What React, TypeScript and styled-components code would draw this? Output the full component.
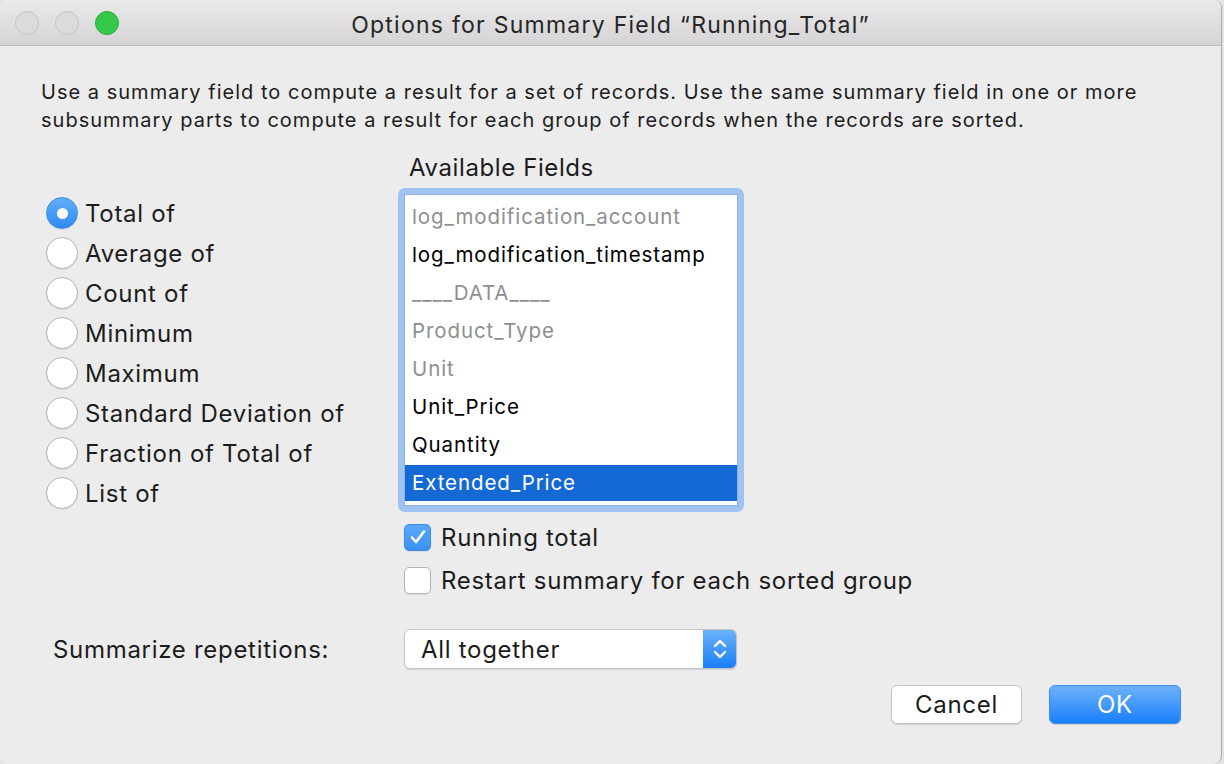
import React from "react";
import styled, { createGlobalStyle } from "styled-components";

const GlobalStyle = createGlobalStyle`
  html, body { margin: 0; padding: 0; }
  body {
    background: #e4e4e4;
    font-family: Inter, "Noto Sans", sans-serif;
    -webkit-font-smoothing: antialiased;
  }
`;

const Window = styled.div`
  width: 1221px;
  height: 764px;
  background: #ececec;
  border-radius: 8px 8px 8px 8px;
  border-right: 1px solid #a9a9a9;
  overflow: hidden;
  display: flex;
  flex-direction: column;
  color: #1c1c1c;
  white-space: nowrap;
`;

const TitleBar = styled.div`
  height: 45px;
  flex: none;
  display: grid;
  grid-template-columns: 1fr auto 1fr;
  align-items: center;
  background: linear-gradient(#ebe9eb, #d5d3d5);
  border-bottom: 1px solid #bdbbbd;
`;

const Lights = styled.div`
  display: flex;
  gap: 16px;
  padding-left: 15px;
`;

const Light = styled.span<{ $c: string; $b: string }>`
  width: 24px;
  height: 24px;
  border-radius: 50%;
  box-sizing: border-box;
  background: ${(p) => p.$c};
  border: 1px solid ${(p) => p.$b};
`;

const Title = styled.div`
  font-size: 23px;
  color: #262626;
  letter-spacing: 1.25px;
  padding-top: 5px;
`;

const Body = styled.div`
  flex: 1;
  display: flex;
  flex-direction: column;
`;

const Description = styled.p`
  margin: 32px 0 0 41px;
  font-size: 20px;
  line-height: 28px;
  letter-spacing: 1.02px;
`;

const Main = styled.div`
  display: grid;
  grid-template-columns: 352px 346px;
  padding-left: 46px;
  margin-top: 20px;
`;

const RadioGroup = styled.div`
  display: flex;
  flex-direction: column;
  padding-top: 39px;
`;

const RadioRow = styled.label`
  display: flex;
  align-items: center;
  height: 40px;
  gap: 7px;
  font-size: 24px;
  letter-spacing: 0.7px;
`;

const RadioCircle = styled.span<{ $on?: boolean }>`
  width: 32px;
  height: 32px;
  flex: none;
  border-radius: 50%;
  box-sizing: border-box;
  display: flex;
  align-items: center;
  justify-content: center;
  background: ${(p) => (p.$on ? "linear-gradient(#62adf8, #2f8af5)" : "#fff")};
  border: 1px solid ${(p) => (p.$on ? "#3a8ee6" : "#b4b4b4")};
  box-shadow: 0 1px 1px rgba(0, 0, 0, 0.08);
  &::after {
    content: "";
    display: ${(p) => (p.$on ? "block" : "none")};
    width: 11px;
    height: 11px;
    border-radius: 50%;
    background: #fff;
  }
`;

const RightCol = styled.div`
  display: flex;
  flex-direction: column;
`;

const Label = styled.div`
  font-size: 24px;
  line-height: 28px;
  padding-left: 11px;
  letter-spacing: 0.6px;
`;

const ListRing = styled.div`
  margin-top: 6px;
  width: 346px;
  height: 324px;
  box-sizing: border-box;
  border: 6px solid #9fc4f1;
  border-radius: 7px;
  background: #fff;
  display: flex;
`;

const List = styled.div`
  flex: 1;
  border: 1px solid #8db3e4;
  display: flex;
  flex-direction: column;
  gap: 2px;
  padding-top: 4px;
`;

const Item = styled.div<{ $dim?: boolean; $sel?: boolean }>`
  height: 36px;
  line-height: 36px;
  padding-left: 7px;
  font-size: 20.5px;
  letter-spacing: 0.9px;
  color: ${(p) => (p.$sel ? "#fff" : p.$dim ? "#8f8f8f" : "#000")};
  background: ${(p) => (p.$sel ? "#1569d5" : "transparent")};
`;

const CheckRow = styled.label<{ $gap: number }>`
  display: flex;
  align-items: center;
  gap: 10px;
  height: 40px;
  margin-top: ${(p) => p.$gap}px;
  padding-left: 6px;
  font-size: 24px;
  letter-spacing: 0.7px;
`;

const Box = styled.span<{ $on?: boolean }>`
  width: 27px;
  height: 27px;
  flex: none;
  box-sizing: border-box;
  border-radius: 5px;
  display: flex;
  align-items: center;
  justify-content: center;
  background: ${(p) => (p.$on ? "linear-gradient(#5aa8f8, #3a90f4)" : "#fff")};
  border: 1px solid ${(p) => (p.$on ? "#3b8de6" : "#b4b4b4")};
  box-shadow: 0 1px 1px rgba(0, 0, 0, 0.08);
`;

const SummRow = styled.div`
  display: grid;
  grid-template-columns: 351px 333px;
  align-items: center;
  padding-left: 53px;
  margin-top: 29px;
  font-size: 24px;
  letter-spacing: 0.7px;
`;

const Select = styled.div`
  height: 40px;
  box-sizing: border-box;
  display: flex;
  background: #fff;
  border: 1px solid #c6c6c6;
  border-radius: 6px;
  box-shadow: 0 1px 1px rgba(0, 0, 0, 0.12);
  overflow: hidden;
`;

const SelectText = styled.div`
  flex: 1;
  display: flex;
  align-items: center;
  padding-left: 16px;
`;

const Stepper = styled.div`
  width: 33px;
  display: flex;
  align-items: center;
  justify-content: center;
  background: linear-gradient(#6ab2fa, #1a7ef9);
`;

const Buttons = styled.div`
  display: flex;
  justify-content: flex-end;
  gap: 27px;
  padding-right: 40px;
  margin-top: 16px;
`;

const Button = styled.button<{ $primary?: boolean }>`
  width: ${(p) => (p.$primary ? 132 : 131)}px;
  height: 39px;
  border-radius: 6px;
  font-family: inherit;
  font-size: 24px;
  letter-spacing: 0.7px;
  padding: 0;
  color: ${(p) => (p.$primary ? "#fff" : "#1c1c1c")};
  background: ${(p) => (p.$primary ? "linear-gradient(#6cb1fa, #1a80fb)" : "#fff")};
  border: 1px solid ${(p) => (p.$primary ? "#3d8ff0" : "#c4c4c4")};
  box-shadow: 0 1px 1px rgba(0, 0, 0, 0.12);
`;

const radios = [
  "Total of",
  "Average of",
  "Count of",
  "Minimum",
  "Maximum",
  "Standard Deviation of",
  "Fraction of Total of",
  "List of",
];

const fields: { name: string; dim?: boolean; sel?: boolean }[] = [
  { name: "log_modification_account", dim: true },
  { name: "log_modification_timestamp" },
  { name: "____DATA____", dim: true },
  { name: "Product_Type", dim: true },
  { name: "Unit", dim: true },
  { name: "Unit_Price" },
  { name: "Quantity" },
  { name: "Extended_Price", sel: true },
];

export default function App() {
  return (
    <>
      <GlobalStyle />
      <Window>
        <TitleBar>
          <Lights>
            <Light $c="#dcdbdc" $b="#c7c6c7" />
            <Light $c="#dcdbdc" $b="#c7c6c7" />
            <Light $c="#35c84a" $b="#2aaa3c" />
          </Lights>
          <Title>Options for Summary Field “Running_Total”</Title>
          <div />
        </TitleBar>
        <Body>
          <Description>
            Use a summary field to compute a result for a set of records. Use the same summary field in one or more
            <br />
            subsummary parts to compute a result for each group of records when the records are sorted.
          </Description>
          <Main>
            <RadioGroup>
              {radios.map((r, i) => (
                <RadioRow key={r}>
                  <RadioCircle $on={i === 0} />
                  {r}
                </RadioRow>
              ))}
            </RadioGroup>
            <RightCol>
              <Label>Available Fields</Label>
              <ListRing>
                <List>
                  {fields.map((f) => (
                    <Item key={f.name} $dim={f.dim} $sel={f.sel}>
                      {f.name}
                    </Item>
                  ))}
                </List>
              </ListRing>
              <CheckRow $gap={5}>
                <Box $on>
                  <svg width="18" height="16" viewBox="0 0 18 16">
                    <path d="M3 8.5 L7 13 L15 2.5" fill="none" stroke="#fff" strokeWidth="2.6" strokeLinecap="round" strokeLinejoin="round" />
                  </svg>
                </Box>
                Running total
              </CheckRow>
              <CheckRow $gap={3}>
                <Box />
                Restart summary for each sorted group
              </CheckRow>
            </RightCol>
          </Main>
          <SummRow>
            <span>Summarize repetitions:</span>
            <Select>
              <SelectText>All together</SelectText>
              <Stepper>
                <svg width="18" height="26" viewBox="0 0 18 26">
                  <path d="M4 10 L9 5 L14 10 M4 16 L9 21 L14 16" fill="none" stroke="#fff" strokeWidth="2.4" strokeLinecap="round" strokeLinejoin="round" />
                </svg>
              </Stepper>
            </Select>
          </SummRow>
          <Buttons>
            <Button>Cancel</Button>
            <Button $primary>OK</Button>
          </Buttons>
        </Body>
      </Window>
    </>
  );
}
